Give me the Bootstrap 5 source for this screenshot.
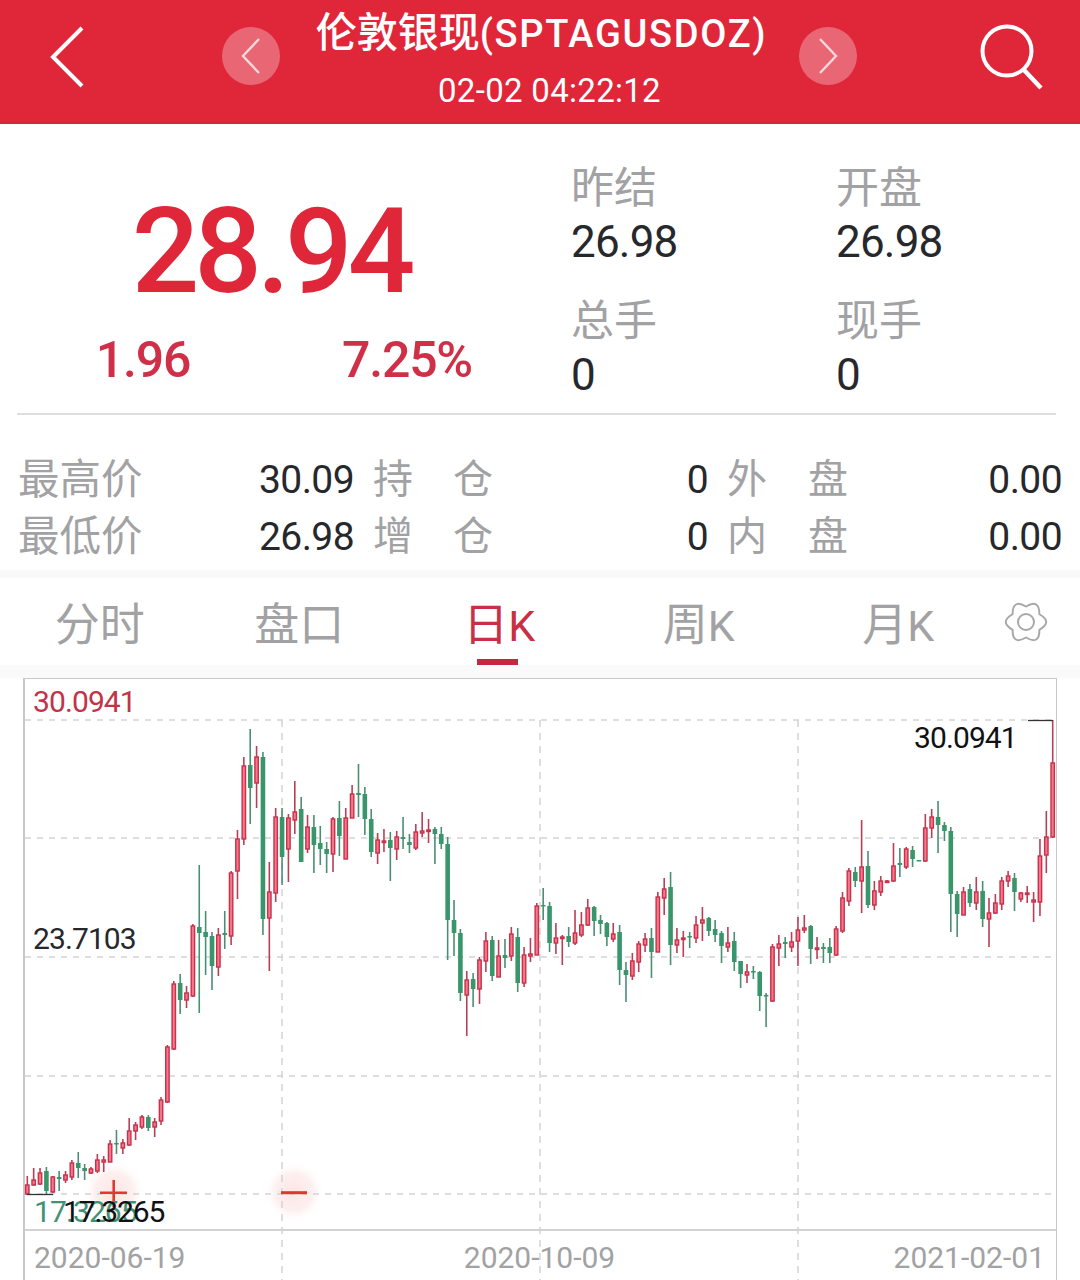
<!DOCTYPE html>
<html lang="zh-CN">
<head>
  <title>伦敦银现</title>
  <meta charset="utf-8">
  <meta name="viewport" content="width=device-width, initial-scale=1">
  <link href="https://cdn.jsdelivr.net/npm/bootstrap@5.3.1/dist/css/bootstrap.min.css" rel="stylesheet">
  <script src="https://cdn.jsdelivr.net/npm/bootstrap@5.3.1/dist/js/bootstrap.bundle.min.js"></script>
  <style>
    body {
      font-family: Roboto, "Noto Sans CJK SC", sans-serif;
      background: #fff;
      width: 1080px;
      height: 1280px;
      overflow: hidden;
      color: #26282c;
    }

    .cjk { font-family: "Noto Sans CJK SC", sans-serif; }

    /* header */
    .top-bar {
      height: 124px;
      background: #e02639;
      color: #fff;
      padding: 0 33px 0 48px;
      border-bottom: 2px solid #cf2a3c;
    }
    .back-icon { margin-top: 24px; }
    .search-icon { margin-top: 24px; margin-left: auto; }
    .top-title { width: 519px; text-align: center; flex-shrink: 0; }
    .top-name { font-size: 38px; font-weight: 500; letter-spacing: 1.7px; line-height: 50px; margin-top: 4px; padding-left: 4px; }
    .top-name .cjk { font-size: 41px; letter-spacing: 0; }
    .top-time { font-size: 33px; line-height: 40px; margin-top: 12px; padding-left: 20px; letter-spacing: .3px; }
    .round-btn {
      width: 58px;
      height: 58px;
      margin-top: 27px;
      border-radius: 50%;
      background: rgba(255, 255, 255, .3);
      flex-shrink: 0;
    }
    .round-prev { margin-left: 134px; }

    /* quote block */
    .quote-box {
      height: 291px;
      margin: 0 24px 0 17px;
      border-bottom: 2px solid #dedee0;
    }
    .quote-left { width: 516px; margin-right: 39px; padding-top: 66px; }
    .price-big {
      font-size: 119px;
      line-height: 120px;
      font-weight: 500;
      color: #e02639;
      text-align: center;
      letter-spacing: -5px;
      padding: 2px 8px 0 0;
    }
    .delta-wrap { margin-top: 18px; }
    .delta-item {
      width: 252px;
      text-align: center;
      font-size: 50px;
      font-weight: 500;
      line-height: 60px;
      color: #cf3048;
      letter-spacing: -1.2px;
    }
    .quote-right {
      display: grid;
      grid-template-columns: 265px 200px;
      padding-top: 33px;
      margin-left: -1px;
    }
    .q-label { font-size: 43px; line-height: 54px; color: #a2a2a4; }
    .q-value { font-size: 44px; line-height: 58px; letter-spacing: -.8px; margin: 2px 0 19px; }

    /* high / low table */
    .stat-grid {
      display: grid;
      grid-template-columns: 124px 212px 139px 215px 140px 214px;
      padding: 36px 0 0 18px;
      height: 155px;
      grid-auto-rows: 57px;
    }
    .s-label { font-size: 41.5px; color: #a2a2a4; line-height: 51px; white-space: nowrap; }
    .s-label-wide { display: flex; justify-content: space-between; padding-left: 19px; font-size: 40px; line-height: 51px; color: #a2a2a4; }
    .s-value { font-size: 39px; line-height: 59px; text-align: right; letter-spacing: -.6px; }

    /* tabs */
    .tab-bar {
      height: 108px;
      background: #fff;
      border-top: 8px solid #f9f9f9;
      border-bottom: 13px solid #fafafa;
    }
    .tab-item {
      width: 199.5px;
      height: 87px;
      font-size: 45px;
      line-height: 87px;
      text-align: center;
      color: #a2a2a4;
      position: relative;
      text-decoration: none;
    }
    .tab-item.is-on { color: #c92f45; }
    .tab-item.is-on::after {
      content: "";
      position: absolute;
      left: 78px;
      bottom: 0;
      width: 41px;
      height: 6px;
      background: #c4283e;
    }
    .tab-k { font-size: 43px; font-weight: 400; font-family: Roboto, sans-serif; letter-spacing: -1px; }
    .gear-box { margin-left: 6px; }

    /* chart */
    .chart-box {
      position: relative;
      height: 602px;
      margin: 0 23px;
      border: solid #c9c9cb;
      border-width: 1px 1px 0 2px;
    }
    .chart-svg { position: absolute; left: -25px; top: -679px; width: 1080px; height: 1280px; filter: blur(.35px); }
    .chart-plot { height: 552px; border-bottom: 2px solid #d2d2d4; }
    .chart-text { position: absolute; font-size: 30px; line-height: 30px; letter-spacing: -.9px; }
    .ax-red { color: #c23349; left: 8px; top: 8px; }
    .ax-mid { color: #26282c; left: 8px; top: 245px; }
    .ax-green { color: #3f9274; left: 9px; top: 518px; }
    .ax-low { color: #111; left: 38px; top: 518px; letter-spacing: -1.1px; }
    .ax-high { color: #111; left: 889px; top: 44px; }
    .axis-row {
      font-size: 30px;
      line-height: 54px;
      color: #a2a2a4;
      padding: 0 11px 0 9px;
      position: relative;
    }
  </style>
</head>
<body>

<!-- header -->
<header class="top-bar d-flex align-items-start">
  <svg class="back-icon" width="40" height="68" viewBox="0 0 40 68"><polyline points="34,4 5,33 34,62" fill="none" stroke="#fff" stroke-width="4"/></svg>
  <div class="round-btn round-prev d-flex align-items-center justify-content-center">
    <svg width="22" height="38" viewBox="0 0 22 38"><polyline points="19,2 3,19 19,36" fill="none" stroke="#fff" stroke-opacity=".75" stroke-width="2.4"/></svg>
  </div>
  <div class="top-title">
    <div class="top-name text-nowrap"><span class="cjk">伦敦银现</span>(SPTAGUSDOZ)</div>
    <div class="top-time">02-02 04:22:12</div>
  </div>
  <div class="round-btn d-flex align-items-center justify-content-center">
    <svg width="22" height="38" viewBox="0 0 22 38"><polyline points="3,2 19,19 3,36" fill="none" stroke="#fff" stroke-opacity=".75" stroke-width="2.4"/></svg>
  </div>
  <svg class="search-icon" width="68" height="72" viewBox="0 0 68 72"><circle cx="28" cy="27" r="24.5" fill="none" stroke="#fff" stroke-width="4"/><line x1="45" y1="46" x2="62" y2="64" stroke="#fff" stroke-width="4.5"/></svg>
</header>

<!-- price and day values -->
<section class="quote-box d-flex">
  <div class="quote-left">
    <div class="price-big">28.94</div>
    <div class="delta-wrap d-flex justify-content-between">
      <div class="delta-item">1.96</div>
      <div class="delta-item">7.25%</div>
    </div>
  </div>
  <div class="quote-right">
    <div><div class="q-label cjk">昨结</div><div class="q-value">26.98</div></div>
    <div><div class="q-label cjk">开盘</div><div class="q-value">26.98</div></div>
    <div><div class="q-label cjk">总手</div><div class="q-value">0</div></div>
    <div><div class="q-label cjk">现手</div><div class="q-value">0</div></div>
  </div>
</section>

<section class="stat-grid">
  <div class="s-label cjk">最高价</div>
  <div class="s-value">30.09</div>
  <div class="s-label-wide cjk"><span>持</span><span>仓</span></div>
  <div class="s-value">0</div>
  <div class="s-label-wide cjk"><span>外</span><span>盘</span></div>
  <div class="s-value">0.00</div>
  <div class="s-label cjk">最低价</div>
  <div class="s-value">26.98</div>
  <div class="s-label-wide cjk"><span>增</span><span>仓</span></div>
  <div class="s-value">0</div>
  <div class="s-label-wide cjk"><span>内</span><span>盘</span></div>
  <div class="s-value">0.00</div>
</section>

<!-- period tabs -->
<nav class="tab-bar d-flex">
  <a class="tab-item cjk" href="#">分时</a>
  <a class="tab-item cjk" href="#">盘口</a>
  <a class="tab-item is-on cjk" href="#">日<span class="tab-k">K</span></a>
  <a class="tab-item cjk" href="#">周<span class="tab-k">K</span></a>
  <a class="tab-item cjk" href="#">月<span class="tab-k">K</span></a>
  <div class="gear-box d-flex align-items-center">
    <svg width="44" height="42" viewBox="-22 -21 44 42"><path id="gearPath" fill="none" stroke="#a8a8aa" stroke-width="2"/><circle r="8" fill="none" stroke="#a8a8aa" stroke-width="2"/></svg>
  </div>
</nav>

<!-- k line chart -->
<section class="chart-box">
  <svg class="chart-svg" id="chartSvg" viewBox="0 0 1080 1280"></svg>
  <div class="chart-plot"></div>
  <div class="axis-row d-flex justify-content-between">
    <span>2020-06-19</span><span>2020-10-09</span><span>2021-02-01</span>
  </div>
  <span class="chart-text ax-red">30.0941</span>
  <span class="chart-text ax-high">30.0941</span>
  <span class="chart-text ax-mid">23.7103</span>
  <span class="chart-text ax-green">17.3265</span>
  <span class="chart-text ax-low">17.3265</span>
</section>

<script>
  //candles in screen pixels: high, body top, body bottom, low, colour
  const candles = [
    [1176,1185,1194,1195,'r'],[1168,1180,1185,1186,'r'],[1168,1173,1184,1185,'r'],[1167,1171,1191,1195,'g'],
    [1176,1177,1192,1193,'r'],[1171,1177,1179,1191,'g'],[1171,1175,1180,1183,'r'],[1160,1163,1177,1180,'r'],
    [1152,1163,1168,1178,'g'],[1164,1168,1171,1180,'g'],[1167,1169,1173,1174,'r'],[1154,1160,1171,1173,'r'],
    [1156,1160,1162,1172,'r'],[1140,1144,1162,1162,'r'],[1130,1143,1144,1154,'g'],[1139,1143,1148,1154,'r'],
    [1118,1131,1145,1146,'r'],[1122,1125,1131,1140,'r'],[1115,1117,1127,1129,'r'],[1115,1117,1128,1131,'g'],
    [1118,1122,1127,1137,'r'],[1097,1100,1121,1125,'r'],[1045,1047,1102,1103,'r'],
    [981,984,1049,1050,'r'],[974,983,1000,1014,'g'],[986,993,1000,1008,'r'],[924,926,996,997,'r'],
    [865,927,933,1013,'g'],[911,932,937,975,'g'],[932,936,966,990,'g'],[928,935,967,976,'r'],
    [911,933,935,949,'g'],[871,873,936,945,'r'],[830,839,871,899,'r'],[757,766,839,845,'r'],
    [729,765,788,824,'g'],[746,757,783,808,'r'],[752,757,919,935,'g'],[862,892,918,971,'r'],
    [808,817,893,902,'r'],[808,817,857,885,'g'],[814,818,849,882,'r'],[781,812,820,834,'r'],
    [797,809,862,862,'g'],[815,827,849,853,'r'],[815,827,845,873,'g'],[826,843,849,865,'g'],
    [842,849,854,873,'g'],[817,819,854,872,'r'],[801,818,836,856,'g'],[808,818,859,859,'r'],
    [785,794,818,818,'r'],[764,793,795,817,'g'],[787,794,819,835,'g'],[809,819,852,857,'g'],
    [833,840,853,864,'r'],[829,841,842,852,'r'],[832,840,848,881,'g'],[831,837,849,860,'r'],
    [817,837,839,849,'g'],[834,842,845,853,'g'],[824,832,848,850,'r'],[812,831,833,837,'r'],
    [819,830,831,843,'r'],[827,829,834,864,'g'],[827,834,844,849,'g'],[837,844,920,960,'g'],
    [900,920,933,956,'g'],[929,933,993,1001,'g'],[971,980,995,1036,'r'],[973,979,989,1007,'g'],
    [957,960,989,1004,'r'],[932,941,961,972,'r'],
    [936,940,976,981,'g'],[940,956,977,977,'r'],[939,955,958,968,'g'],[927,934,956,961,'r'],
    [928,937,983,992,'g'],[947,955,983,987,'r'],[938,954,956,962,'r'],[903,906,955,955,'r'],
    [888,905,906,920,'g'],[902,906,943,952,'g'],[923,938,943,954,'r'],[935,937,938,965,'r'],
    [927,936,942,947,'g'],[910,933,943,945,'r'],[912,925,935,937,'r'],[899,908,925,926,'r'],
    [906,907,921,936,'g'],[915,920,924,934,'g'],[922,923,937,946,'g'],[923,934,939,942,'r'],
    [925,932,970,985,'g'],[962,970,975,1002,'g'],[953,961,976,980,'r'],[941,944,962,972,'r'],
    [933,939,945,952,'r'],[928,938,952,978,'g'],[892,897,952,952,'r'],[878,889,898,915,'r'],
    [872,887,945,965,'g'],[928,940,945,953,'r'],[931,938,939,957,'r'],[932,936,937,948,'g'],
    [916,925,938,943,'r'],[907,920,923,941,'r'],[917,918,931,936,'g'],[920,929,935,942,'g'],
    [931,933,946,963,'g'],[927,943,947,952,'r'],[932,941,962,971,'g'],[961,961,974,988,'g'],
    [964,972,975,983,'r'],[966,971,972,979,'g'],[971,972,996,1011,'g'],[993,995,996,1027,'g'],
    [944,947,1001,1002,'r'],[935,944,948,966,'r'],
    [937,942,944,958,'g'],[932,942,947,952,'r'],[917,930,941,966,'r'],[915,928,930,933,'r'],
    [925,926,949,964,'g'],[937,948,949,959,'r'],[943,947,949,963,'g'],[938,947,953,963,'g'],
    [926,929,955,956,'r'],[892,898,931,933,'r'],[868,871,901,906,'r'],[867,872,881,887,'g'],
    [820,867,881,913,'r'],[851,866,905,908,'g'],[881,891,905,910,'r'],[876,881,892,896,'r'],
    [880,881,881,881,'r'],[843,866,881,882,'r'],[848,863,865,877,'g'],[847,849,867,869,'r'],
    [846,850,859,867,'g'],[860,860,861,861,'g'],[814,828,861,862,'r'],[809,817,828,838,'r'],
    [801,817,825,853,'g'],[822,825,831,841,'g'],[827,831,894,932,'g'],[891,894,914,937,'g'],
    [887,892,915,915,'r'],[884,889,903,907,'g'],[877,892,903,910,'r'],[881,891,919,927,'g'],
    [898,913,919,947,'r'],[894,903,913,914,'r'],[877,881,904,910,'r'],[871,876,881,887,'r'],
    [873,878,892,911,'g'],[892,893,899,902,'r'],[886,893,894,903,'r'],[892,900,902,922,'r'],
    [839,856,902,916,'r'],[811,837,855,873,'r'],[720,763,837,838,'r']
  ];

  function drawChart() {
    //soft glow behind the zoom buttons
    let out = `<defs><radialGradient id="haloFill"><stop offset="0" stop-color="#fce6e4"/><stop offset=".6" stop-color="#fdf0ef"/><stop offset="1" stop-color="#fff" stop-opacity="0"/></radialGradient></defs>`;
    out += `<circle cx="114" cy="1192" r="32" fill="url(#haloFill)"/><circle cx="294" cy="1192" r="31" fill="url(#haloFill)"/>`;

    //grid lines
    [720, 838, 957, 1076, 1194].forEach(y => {
      out += `<line x1="25" x2="1056" y1="${y}" y2="${y}" stroke="#d4d4d6" stroke-width="1.3" stroke-dasharray="6 6"/>`;
    });
    [282, 540, 798].forEach(x => {
      out += `<line x1="${x}" x2="${x}" y1="720" y2="1280" stroke="#d4d4d6" stroke-width="1.5" stroke-dasharray="7 6"/>`;
    });

    //candles
    const step = (1052.7 - 27.3) / (candles.length - 1);
    candles.forEach((c, i) => {
      const x = 27.3 + i * step;
      const h = Math.max(c[2] - c[1], 1.5);
      if (c[4] === 'r') {
        out += `<line x1="${x}" x2="${x}" y1="${c[0]}" y2="${c[3]}" stroke="#b93f55" stroke-width="1.6"/>`;
        out += `<rect x="${x - 1.7}" y="${c[1]}" width="3.4" height="${h}" fill="#f2788b" stroke="#c9304a" stroke-width="1.4"/>`;
      } else {
        out += `<line x1="${x}" x2="${x}" y1="${c[0]}" y2="${c[3]}" stroke="#4a8f72" stroke-width="1.6"/>`;
        out += `<rect x="${x - 2.3}" y="${c[1]}" width="4.6" height="${h}" fill="#38966a"/>`;
      }
    });

    //high and low markers
    out += `<line x1="1028" x2="1053" y1="720.5" y2="720.5" stroke="#333" stroke-width="1.3"/>`;
    out += `<line x1="27" x2="53" y1="1194.5" y2="1194.5" stroke="#333" stroke-width="1.3"/>`;

    //plus and minus buttons
    out += `<path d="M100 1192.7H127M113.7 1180V1207" stroke="#e0392f" stroke-width="2.6" fill="none"/>`;
    out += `<path d="M281 1192.7H307" stroke="#d9392f" stroke-width="3" fill="none"/>`;

    document.getElementById("chartSvg").innerHTML = out;
  }

  //settings gear outline, six lobes with one pointing right
  function drawGear() {
    let d = "";
    for (let k = 0; k < 6; k++) {
      const a = k * 60 * Math.PI / 180;
      const b = (k * 60 + 30) * Math.PI / 180;
      const start = (k * 60 - 30) * Math.PI / 180;
      if (k === 0) d += `M${15.5 * Math.cos(start)} ${15.5 * Math.sin(start)}`;
      d += `Q${27 * Math.cos(a)} ${27 * Math.sin(a)} ${15.5 * Math.cos(b)} ${15.5 * Math.sin(b)}`;
    }
    document.getElementById("gearPath").setAttribute("d", d + "Z");
  }

  drawChart();
  drawGear();
</script>

</body>
</html>
